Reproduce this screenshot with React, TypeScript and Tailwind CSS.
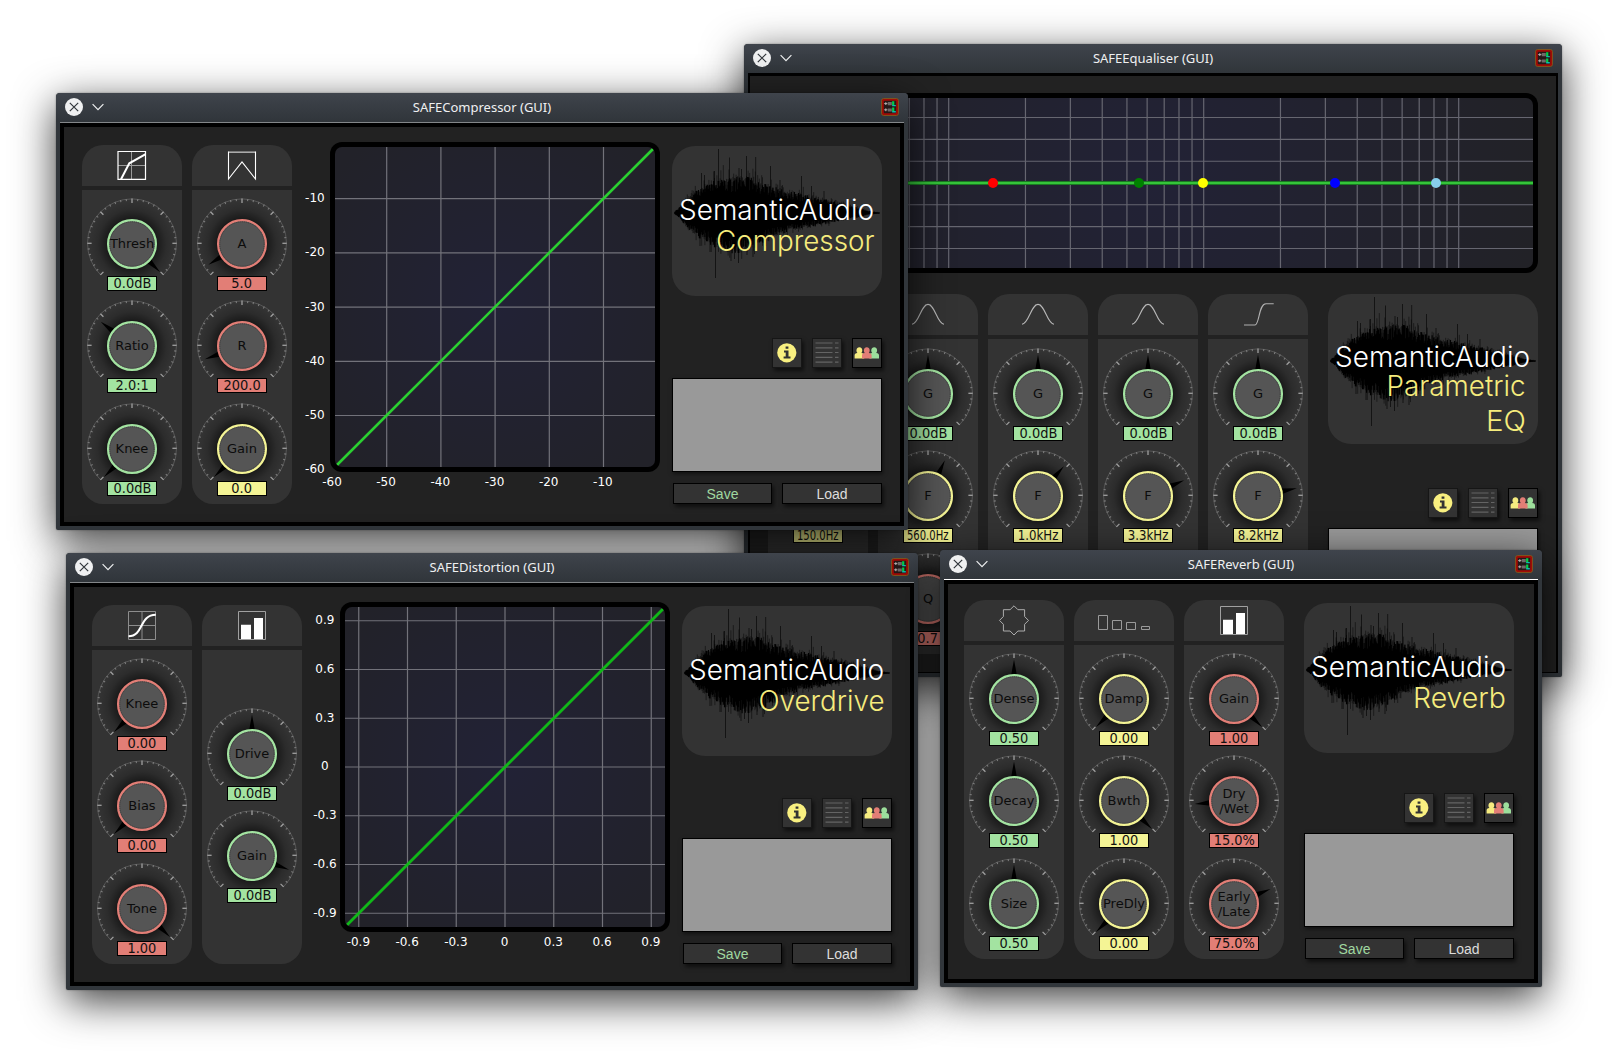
import React from "react";

type Tone = "green" | "red" | "yellow";

const toneHex: Record<Tone, string> = { green: "#a3e3a1", red: "#e27e76", yellow: "#f4f495" };
const toneBg: Record<Tone, string> = {
  green: "bg-[#a3e3a1]",
  red: "bg-[#e27e76]",
  yellow: "bg-[#f4f495]",
};

interface KnobProps {
  label: string[];
  value: string;
  tone: Tone;
  angle: number;
  squeeze?: string;
}

const k = (label: string, value: string, tone: Tone, angle: number, squeeze?: string): KnobProps => ({
  label: label.split("|"),
  value,
  tone,
  angle,
  squeeze,
});

const tickAngles = Array.from({ length: 37 }, (_, i) => -135 + i * 7.5);

function Knob({ label, value, tone, angle, squeeze = "scale-x-[0.97]" }: KnobProps) {
  return (
    <div className="flex w-[90px] flex-col items-center">
      <svg width="90" height="77" viewBox="0 0 90 77" className="block overflow-visible">
        <circle cx="45" cy="45" r="43" fill="url(#knobShade)" />
        <g transform="translate(0 -0.7)">
          <path d="M13.5 76.5A44.5 44.5 0 1 1 76.5 76.5" fill="none" stroke="#606060" strokeWidth="0.8" />
          {tickAngles.map((a, i) => (
            <line
              key={a}
              x1="45"
              x2="45"
              y1="0.3"
              y2={i % 6 === 0 ? 4.6 : 2.4}
              stroke={i % 6 === 0 ? "#a0a0a0" : "#7c7c7c"}
              strokeWidth={i % 6 === 0 ? 1.3 : 1.1}
              transform={`rotate(${a} 45 45)`}
            />
          ))}
        </g>
        <path d="M45 5.5L48 22H42Z" fill="#000" transform={`rotate(${angle} 45 45)`} />
        <circle cx="45" cy="45" r="23.9" fill="#555" stroke={toneHex[tone]} strokeWidth="2.3" />
        <circle cx="45" cy="45" r="22.2" fill="none" stroke="#3c3c3c" strokeWidth="0.9" strokeDasharray="1.2 0.8" />
        {label.map((t, i) => (
          <text
            key={t}
            x="45"
            y={(label.length === 1 ? 49.2 : 42) + i * 15}
            textAnchor="middle"
            fontSize="13"
            fontFamily="DejaVu Sans, sans-serif"
            fill="#0c0c0c"
          >
            {t}
          </text>
        ))}
      </svg>
      <div
        className={`flex h-[15px] w-[50px] items-center justify-center border border-black text-[13.4px] leading-[13px] whitespace-nowrap text-[#111] ${toneBg[tone]}`}
      >
        <span className={`inline-block ${squeeze}`}>{value}</span>
      </div>
    </div>
  );
}

type HeadIcon = "comp" | "attack" | "sigmoid" | "bars" | "star" | "decay" | "bell" | "high" | "low";

function HeaderIcon({ kind }: { kind: HeadIcon }) {
  return (
    <svg width="100" height="41" viewBox="0 0 100 41" className="block" fill="none">
      {kind === "comp" && (
        <>
          <path d="M49.5 6V34M36 20.5H64" stroke="#999" />
          <path d="M36 6.5H63.5V34.3H36Z" stroke="#fff" strokeWidth="1.2" />
          <path d="M39 34.3L47.3 18.3L63.7 9.2" stroke="#fff" strokeWidth="2" />
        </>
      )}
      {kind === "attack" && (
        <>
          <path d="M36.5 7.2H63.5" stroke="#aaa" strokeWidth="1.6" />
          <path d="M36.5 6.5V34L50 17L63.5 34V6.5" stroke="#fff" strokeWidth="1.1" />
        </>
      )}
      {kind === "sigmoid" && (
        <>
          <path d="M36.5 6.5H63.5V34.5H36.5ZM50 6.5V34M36.5 20.5H63.5" stroke="#8d8d8d" />
          <path d="M36.5 31.3C52 31.3 47 9.7 63.8 9.7" stroke="#fff" strokeWidth="2" />
        </>
      )}
      {kind === "bars" && (
        <>
          <path d="M36.5 6.5H63.5V34.5H36.5Z" stroke="#a0a0a0" />
          <path d="M39 19.7H49V34H39ZM52 13H61V34H52Z" fill="#fff" />
        </>
      )}
      {kind === "star" && (
        <path
          d="M50 5.8L53.9 9.7H60.6V16.5L64.5 20.4L60.6 24.3V31H53.9L50 35L46.1 31H39.4V24.3L35.5 20.4L39.4 16.5V9.7H46.1Z"
          stroke="#b4b4b4"
          strokeWidth="0.95"
        />
      )}
      {kind === "decay" && (
        <path
          d="M24.5 15.5H33.5V29.5H24.5ZM38.5 20.5H47.5V29.5H38.5ZM52.5 22.5H61.5V29.5H52.5ZM67.5 26.5H75.5V29.5H67.5Z"
          stroke="#9a9a9a"
        />
      )}
      {kind === "bell" && (
        <path d="M34 30.3C41 29.6 43 10.4 50 10.4S59 29.6 66 30.3" stroke="#b8b8b8" strokeWidth="1.1" />
      )}
      {kind === "high" && (
        <path d="M36 31H47C51.5 31 50.5 9.7 58 9.7H65.7" stroke="#b0b0b0" strokeWidth="1.1" />
      )}
      {kind === "low" && (
        <path d="M34.3 9.7H42C49.5 9.7 48.5 31 53 31H64" stroke="#b0b0b0" strokeWidth="1.1" />
      )}
    </svg>
  );
}

function Column({ icon, knobs, pad = "pt-[9px]", body = "h-[314px]" }: { icon: HeadIcon; knobs: KnobProps[]; pad?: string; body?: string }) {
  return (
    <div className="flex w-[100px] flex-col gap-1">
      <div className="h-[41px] rounded-t-[21px] bg-[#333]">
        <HeaderIcon kind={icon} />
      </div>
      <div className={`flex flex-col items-center rounded-b-[21px] bg-[#333] ${body} ${pad}`}>
        {knobs.map((p, i) => (
          <div key={i} className={i === 0 ? "" : i === 1 ? "mt-[10px]" : "mt-[11px]"}>
            <Knob {...p} />
          </div>
        ))}
      </div>
    </div>
  );
}

/* Amplitude envelope of the logo's waveform: x, height above, height below. */
const envelope: [number, number, number][] = [
  [2, 0.5, 0.5], [8, 7, 6], [18, 18, 19], [30, 27, 28], [42, 33, 35], [55, 35, 41], [70, 38, 42], [80, 37, 38],
  [90, 31, 31], [105, 26, 24], [120, 22, 18], [140, 17, 14], [155, 14, 11], [170, 10, 8], [185, 6, 5], [195, 2.5, 2], [208, 0.5, 0.5],
];

function envelopeAt(x: number): [number, number] {
  for (let i = 1; i < envelope.length; i++) {
    const a = envelope[i - 1];
    const b = envelope[i];
    if (x <= b[0]) {
      const t = (x - a[0]) / (b[0] - a[0]);
      return [a[1] + (b[1] - a[1]) * t, a[2] + (b[2] - a[2]) * t];
    }
  }
  return [0.5, 0.5];
}

function buildWave() {
  let seed = 77;
  const rnd = () => {
    seed = (seed * 16807) % 2147483647;
    return seed / 2147483647;
  };
  let core = "";
  let haze = "";
  for (let x = 2.5; x < 208; x += 0.8) {
    const [u, d] = envelopeAt(x);
    const X = x.toFixed(1);
    core += `M${X} ${(67 - u * (0.58 + rnd() * 0.4)).toFixed(1)}V${(67 + d * (0.58 + rnd() * 0.4)).toFixed(1)}`;
    haze += `M${X} ${(67 - u * (0.8 + rnd() * rnd() * 0.6)).toFixed(1)}V${(67 + d * (0.8 + rnd() * rnd() * 0.45)).toFixed(1)}`;
  }
  return { core, haze };
}

const wave = buildWave();
const peaks =
  "M46.5 3V67M57.5 11.5V67M74.5 10V67M83.7 11V67M98.5 20V67M129.5 30V67M29.5 27V67M32.5 29V67M42.5 25V67M67 22V67M69.5 23V67M139.5 40V67M152 45V67M108 34V67M43.5 132V67M66.5 117V67M59 115V67M81 111V67M75 109V67M62.5 113V67M28 100V67M38 106V67M92 97V67";

type Sub = { text: string; x: number; w: number; y: number };

function Logo({ subs, baseline }: { subs: Sub[]; baseline: number }) {
  return (
    <div className="h-[150px] w-[210px] rounded-[23px] bg-[#333]">
      <svg width="210" height="150" viewBox="0 0 210 150" className="block">
        <path d={peaks} stroke="#000" strokeOpacity="0.6" />
        <path d={wave.haze} stroke="#000" strokeOpacity="0.6" strokeWidth="0.8" />
        <path d={wave.core} stroke="#000" strokeWidth="1.1" />
        <g fontSize="28" fontWeight="300" fontFamily="Inter, Liberation Sans, sans-serif">
          <text x="7" y={baseline} textLength="195" lengthAdjust="spacingAndGlyphs" fill="#fff">
            SemanticAudio
          </text>
          {subs.map((s) => (
            <text
              key={s.text}
              x={s.x}
              y={s.y}
              textLength={s.w}
              lengthAdjust="spacingAndGlyphs"
              fill="#f6ec7d"
            >
              {s.text}
            </text>
          ))}
        </g>
      </svg>
    </div>
  );
}

const tile = "size-[30px] border border-[#161616] bg-[#333] shadow-[2px_3px_4px_rgba(0,0,0,0.55)]";
const person = "M0 11.5V8.4C0 6.9 0.8 6.4 2.8 6C1.4 4.8 1.3 0.3 4.8 0.3S8.2 4.8 6.8 6C8.8 6.4 9.6 6.9 9.6 8.4V11.5Z";

function Sidebar({ subs, gap = "mt-[42px]", baseline = 73.7 }: { subs: Sub[]; gap?: string; baseline?: number }) {
  return (
    <div className="flex w-[210px] flex-col">
      <Logo subs={subs} baseline={baseline} />
      <div className={`flex justify-end gap-[10px] ${gap}`}>
        <div className={tile}>
          <svg width="28" height="28" viewBox="0 0 28 28">
            <circle cx="13.8" cy="13.8" r="9.6" fill="#f9f080" />
            <path d="M12.6 7.4H15.4V9.8H12.6ZM11 11.6H15.5V17.6H17.5V19.6H10.6V17.6H12.7V13.4H11Z" fill="#333" />
          </svg>
        </div>
        <div className={tile}>
          <svg width="28" height="28" viewBox="0 0 28 28">
            <path
              d="M2.5 4H19.5M22 4H25.5M2.5 8.8H19.5M22 8.8H25.5M2.5 13.5H19.5M22 13.5H25.5M2.5 18.3H19.5M22 18.3H25.5M2.5 23.2H19.5M22 23.2H25.5"
              stroke="#646464"
              strokeWidth="1.2"
            />
          </svg>
        </div>
        <div className="size-[30px] border border-black bg-[#333] shadow-[2px_3px_4px_rgba(0,0,0,0.55)]">
          <svg width="28" height="28" viewBox="0 0 28 28">
            <path d={person} fill="#f6ec80" transform="translate(1.6 8)" />
            <path d={person} fill="#9ddf9c" transform="translate(16.4 8)" />
            <path d={person} fill="#e27e76" transform="translate(9 8)" />
          </svg>
        </div>
      </div>
      <div className="mt-[10px] h-[94px] border border-black bg-[#999] shadow-[1px_2px_4px_rgba(0,0,0,0.5)]" />
      <div className="mt-[11px] ml-px flex justify-between font-['Liberation_Sans',Arial,sans-serif] text-[14px] leading-[20px]">
        <button className="h-[21px] w-[99px] border border-black bg-[#333] text-[#a0d8a0] shadow-[2px_3px_4px_rgba(0,0,0,0.55)]">Save</button>
        <button className="h-[21px] w-[100px] border border-black bg-[#333] text-[#dcdcdc] shadow-[2px_3px_4px_rgba(0,0,0,0.55)]">Load</button>
      </div>
    </div>
  );
}

interface Axis {
  at: number;
  label: string;
}

function TransferChart({ id, x, y, corner, line, width }: { id: string; x: Axis[]; y: Axis[]; corner?: string; line: string; width: number }) {
  return (
    <svg
      width="380"
      height="360"
      viewBox="0 0 380 360"
      className="mt-[-8px] block shrink-0"
      fontFamily="DejaVu Sans, sans-serif"
      fontSize="12"
      fill="#fff"
      textAnchor="middle"
    >
      <clipPath id={id}>
        <rect x="43" y="10" width="320" height="320" rx="7" />
      </clipPath>
      <rect x="38" y="5" width="330" height="330" rx="12" fill="#000" />
      <g clipPath={`url(#${id})`}>
        <rect x="43" y="10" width="320" height="320" fill="url(#plotShade)" />
        {x.map((g) => (
          <line key={g.at} x1={g.at} x2={g.at} y1="10" y2="330" stroke="#72727a" strokeWidth="1.2" />
        ))}
        {y.map((g) => (
          <line key={g.at} y1={g.at} y2={g.at} x1="43" x2="363" stroke="#72727a" strokeWidth="1.2" />
        ))}
        <path d="M45 328L361 12" stroke={line} strokeWidth={width} />
      </g>
      {x.map((g) => (
        <text key={g.label} x={corner ? g.at - 0.6 : g.at - 0.4} y="349">
          {g.label}
        </text>
      ))}
      {y.map((g) => (
        <text key={g.label} x="22.9" y={g.at + 3.4}>
          {g.label}
        </text>
      ))}
      {corner && (
        <>
          <text x="40" y="349">{corner}</text>
          <text x="22.9" y="335.7">{corner}</text>
        </>
      )}
    </svg>
  );
}

const freqLines = [1, 2, 3, 4, 5, 6, 7, 8, 9].flatMap((m) => [10, 100, 1000, 10000].map((d) => m * d)).filter((f) => f >= 20 && f <= 10000);
const bands: [number, string][] = [
  [225, "#ff0000"],
  [371, "#008000"],
  [435, "#ffff00"],
  [567, "#0000ff"],
  [668, "#87ceeb"],
];

function EqChart() {
  return (
    <svg width="770" height="180" viewBox="0 0 770 180" className="block">
      <clipPath id="eqClip">
        <rect x="5" y="5" width="760" height="170" rx="7" />
      </clipPath>
      <rect width="770" height="180" rx="12" fill="#000" />
      <g clipPath="url(#eqClip)">
        <rect x="5" y="5" width="760" height="170" fill="url(#eqShade)" />
        {freqLines.map((f) => {
          const x = 180.7 + 255 * Math.log10(f / 100);
          return <line key={f} x1={x} x2={x} y1="5" y2="175" stroke="#666670" strokeWidth="1.2" />;
        })}
        {[24.5, 46.4, 68.2, 90, 111.7, 133.6, 155.5].map((y) => (
          <line key={y} x1="5" x2="765" y1={y} y2={y} stroke="#666670" strokeWidth="1.1" />
        ))}
        <path d="M5 90H765" stroke="#1a7a22" strokeWidth="4" />
        <path d="M5 90H765" stroke="#35c43a" strokeWidth="2" />
      </g>
      {bands.map(([x, c]) => (
        <circle key={c} cx={x} cy="90" r="5" fill={c} />
      ))}
    </svg>
  );
}

function PluginIcon() {
  return (
    <svg width="18" height="18" viewBox="0 0 18 18">
      <rect x="0.5" y="0.5" width="17" height="17" rx="2.2" fill="#a00c06" stroke="#80601c" strokeWidth="0.8" />
      <rect x="2.8" y="2.8" width="12.4" height="12.4" rx="0.8" fill="#241818" />
      <path d="M3.2 5.6H6.4M3.2 11.8H6.4M4.8 4.2V7M4.8 10.4V13.2" stroke="#b9b0b0" strokeWidth="1" />
      <path d="M6.8 4H10.8V7.2H6.8ZM6.8 10.4H10.8V13.4H6.8Z" fill="#6e6868" />
      <path d="M12.2 3.2V7.4M12.2 9.4V13.6" stroke="#00d048" strokeWidth="2.2" />
      <path d="M11.2 7.6H14.8M11.2 13.8H14.8" stroke="#10b8b0" strokeWidth="1.4" />
    </svg>
  );
}

interface WindowProps {
  title: string;
  place: string;
  rule: string;
  inner?: string;
  children: React.ReactNode;
}

function PluginWindow({ title, place, rule, inner = "border-4", children }: WindowProps) {
  return (
    <section
      className={`absolute flex flex-col overflow-visible rounded-t-[4px] rounded-b-[2px] bg-[#31363b] px-1 pb-1 shadow-[0_11px_42px_rgba(0,0,0,0.78),0_0_2px_rgba(0,0,0,0.4)] ${place}`}
    >
      <header className="-mx-1 flex h-[29px] shrink-0 items-center rounded-t-[4px] bg-linear-to-b from-[#3f444c] to-[#30353a] px-[9px] pb-px font-['Noto_Sans',sans-serif] text-[13px] text-[#eff0f1]">
        <div className="flex w-10 items-center gap-[9px]">
          <svg width="18" height="18" viewBox="0 0 18 18" className="shrink-0">
            <circle cx="9" cy="9" r="9" fill="#eff0f1" />
            <path d="M4.8 4.8L13.2 13.2M13.2 4.8L4.8 13.2" stroke="#31363b" strokeWidth="1.2" />
          </svg>
          <svg width="12" height="8" viewBox="0 0 12 8" className="shrink-0">
            <path d="M0.6 1.2L6 6.6L11.4 1.2" fill="none" stroke="#eff0f1" strokeWidth="1.2" />
          </svg>
        </div>
        <h1 className="flex-1 pt-px text-center">{title}</h1>
        <div className="flex w-10 justify-end">
          <PluginIcon />
        </div>
      </header>
      <div className={`h-px shrink-0 ${rule}`} />
      <div className={`min-h-0 flex-1 border-black bg-[#222] ${inner}`}>{children}</div>
    </section>
  );
}

const compX: Axis[] = ["-50", "-40", "-30", "-20", "-10"].map((label, i) => ({ label, at: 94.7 + 54.2 * i }));
const compY: Axis[] = ["-10", "-20", "-30", "-40", "-50"].map((label, i) => ({ label, at: 61.7 + 54.2 * i }));
const steps = ["-0.9", "-0.6", "-0.3", "0", "0.3", "0.6", "0.9"];
const distX: Axis[] = steps.map((label, i) => ({ label, at: 56.75 + 48.75 * i }));
const distY: Axis[] = [...steps].reverse().map((label, i) => ({ label, at: 23.75 + 48.75 * i }));

const eqColumns: { icon: HeadIcon; freq: string; angle: number; squeeze: string }[] = [
  { icon: "low", freq: "150.0Hz", angle: -20, squeeze: "scale-x-[0.75]" },
  { icon: "bell", freq: "560.0Hz", angle: 25.3, squeeze: "scale-x-[0.75]" },
  { icon: "bell", freq: "1.0kHz", angle: 40.9, squeeze: "scale-x-[0.88]" },
  { icon: "bell", freq: "3.3kHz", angle: 66.5, squeeze: "scale-x-[0.88]" },
  { icon: "high", freq: "8.2kHz", angle: 78.6, squeeze: "scale-x-[0.88]" },
];

export default function App() {
  return (
    <main className="relative h-[1058px] w-[1618px] overflow-hidden bg-white font-['DejaVu_Sans',sans-serif]">
      <svg className="absolute size-0">
        <defs>
          <radialGradient id="knobShade">
            <stop offset="0.5" stopColor="#000" stopOpacity="0.72" />
            <stop offset="0.62" stopColor="#000" stopOpacity="0.42" />
            <stop offset="0.8" stopColor="#000" stopOpacity="0.14" />
            <stop offset="1" stopColor="#000" stopOpacity="0" />
          </radialGradient>
          <radialGradient id="plotShade" r="0.65">
            <stop offset="0" stopColor="#222236" />
            <stop offset="1" stopColor="#222229" />
          </radialGradient>
          <radialGradient id="eqShade" gradientUnits="userSpaceOnUse" cx="385" cy="90" r="385">
            <stop offset="0" stopColor="#222236" />
            <stop offset="1" stopColor="#222227" />
          </radialGradient>
        </defs>
      </svg>

      <PluginWindow title="SAFEEqualiser (GUI)" place="left-[744px] top-[44px] h-[633px] w-[818px]" rule="bg-black" inner="border-2 border-b">
        <div className="flex flex-col gap-[21px] pt-[17px] pl-[18px]">
          <EqChart />
          <div className="flex gap-5">
            <div className="flex gap-[10px]">
              {eqColumns.map((c) => (
                <Column
                  key={c.freq}
                  icon={c.icon}
                  pad="pt-[10px]"
                  body="h-[315px]"
                  knobs={[k("G", "0.0dB", "green", 0), k("F", c.freq, "yellow", c.angle, c.squeeze), k("Q", "0.7", "red", -120)]}
                />
              ))}
            </div>
            <Sidebar
              gap="mt-[44px]"
              baseline={73.2}
              subs={[
                { text: "Parametric", x: 58.5, w: 139, y: 102 },
                { text: "EQ", x: 158, w: 40, y: 136.7 },
              ]}
            />
          </div>
        </div>
      </PluginWindow>

      <PluginWindow title="SAFECompressor (GUI)" place="left-[56px] top-[93px] h-[437px] w-[852px]" rule="bg-[#84878a]">
        <div className="flex pt-[18px] pl-[18px]">
          <div className="flex gap-[10px]">
            <Column
              icon="comp"
              knobs={[k("Thresh", "0.0dB", "green", 135), k("Ratio", "2.0:1", "green", -52.3), k("Knee", "0.0dB", "green", -135)]}
            />
            <Column icon="attack" knobs={[k("A", "5.0", "red", -121.6), k("R", "200.0", "red", -109.7), k("Gain", "0.0", "yellow", -135)]} />
          </div>
          <TransferChart id="compClip" x={compX} y={compY} corner="-60" line="#2bd031" width={2.6} />
          <div className="pt-px">
            <Sidebar subs={[{ text: "Compressor", x: 44, w: 158.5, y: 104.7 }]} />
          </div>
        </div>
      </PluginWindow>

      <PluginWindow title="SAFEDistortion (GUI)" place="left-[66px] top-[553px] h-[437px] w-[852px]" rule="bg-[#84878a]">
        <div className="flex pt-[18px] pl-[18px]">
          <div className="flex gap-[10px]">
            <Column icon="sigmoid" knobs={[k("Knee", "0.00", "red", -135), k("Bias", "0.00", "red", -135), k("Tone", "1.00", "red", 135)]} />
            <Column icon="bars" pad="pt-[59px]" knobs={[k("Drive", "0.0dB", "green", 0), k("Gain", "0.0dB", "green", 110.2)]} />
          </div>
          <TransferChart id="distClip" x={distX} y={distY} line="#10b818" width={2.8} />
          <div className="pt-px">
            <Sidebar subs={[{ text: "Overdrive", x: 76.5, w: 126, y: 104.7 }]} />
          </div>
        </div>
      </PluginWindow>

      <PluginWindow title="SAFEReverb (GUI)" place="left-[940px] top-[550px] h-[437px] w-[602px]" rule="bg-white">
        <div className="flex gap-5 pt-4 pl-4">
          <div className="flex gap-[10px]">
            <Column icon="star" knobs={[k("Dense", "0.50", "green", 0), k("Decay", "0.50", "green", 0), k("Size", "0.50", "green", 0)]} />
            <Column icon="decay" knobs={[k("Damp", "0.00", "yellow", -135), k("Bwth", "1.00", "yellow", 135), k("PreDly", "0.00", "yellow", -135)]} />
            <Column
              icon="bars"
              knobs={[k("Gain", "1.00", "red", 135), k("Dry|/Wet", "15.0%", "red", -94.5), k("Early|/Late", "75.0%", "red", 67.5)]}
            />
          </div>
          <div className="pt-[3px]">
            <Sidebar gap="mt-[40px]" subs={[{ text: "Reverb", x: 109, w: 93, y: 104.7 }]} />
          </div>
        </div>
      </PluginWindow>
    </main>
  );
}
